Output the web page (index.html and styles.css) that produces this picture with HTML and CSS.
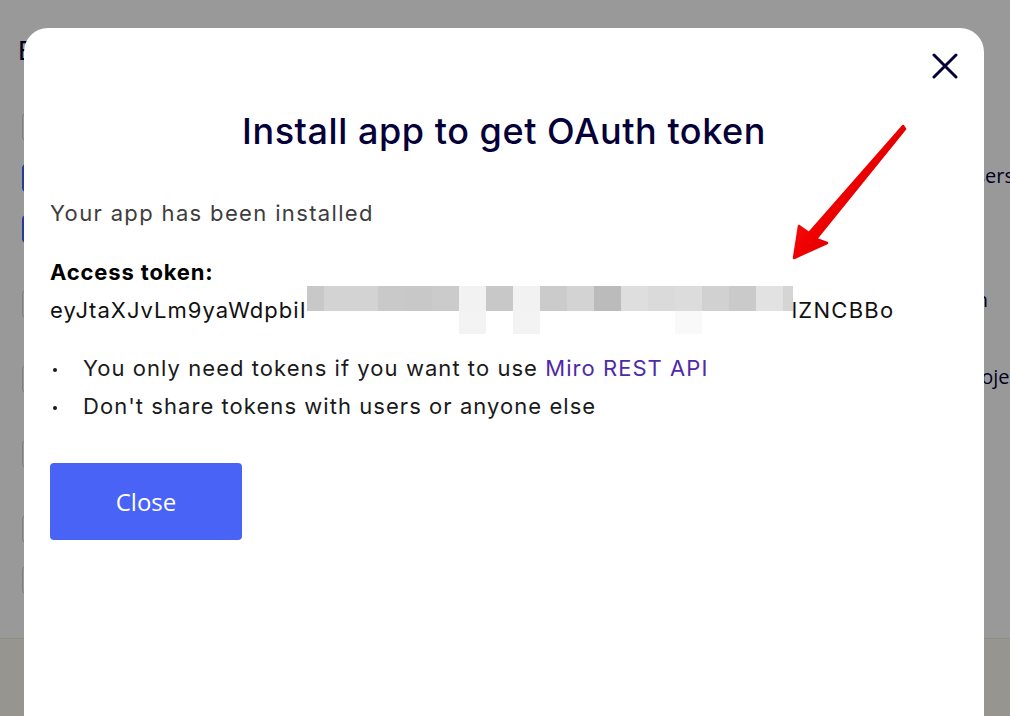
FILE: index.html
```html
<!DOCTYPE html>
<html lang="en">
<head>
<meta charset="utf-8">
<title>Install app to get OAuth token</title>
<link rel="stylesheet" href="styles.css">
</head>
<body>
<div class="page">
  <div class="page-main">
    <div class="left-col">
      <div class="page-heading">Edit app</div>
      <div class="field"></div>
      <div class="field blue gap-s"></div>
      <div class="field blue gap-s"></div>
      <div class="field gap-l"></div>
      <div class="field gap-l"></div>
      <div class="field gap-l"></div>
      <div class="field gap-l"></div>
      <div class="field gap-s"></div>
    </div>
    <div class="right-col">
      <div class="rtext r1">Users</div>
      <div class="rtext r2">Admin</div>
      <div class="rtext r3">Projects</div>
    </div>
  </div>
  <div class="page-footer"></div>
</div>

<div class="overlay"></div>

<div class="modal">
  <button class="modal-x" aria-label="Close">
    <svg width="26" height="26" viewBox="0 0 26 26"><path d="M2 2 L24 24 M24 2 L2 24" stroke="#050038" stroke-width="3" stroke-linecap="round" fill="none"/></svg>
  </button>
  <h1 class="modal-title">Install app to get OAuth token</h1>
  <p class="installed">Your app has been installed</p>
  <div class="token-label">Access token:</div>
  <div class="token-line">
    <span class="token-text">eyJtaXJvLm9yaWdpbiI</span>
    <span class="mosaic">
      <i style="background:#c8c8c8"></i><i style="background:#d3d3d3"></i><i style="background:#d3d3d3"></i><i style="background:#c9c9c9"></i><i style="background:#c8c8c8"></i><i style="background:#cbcbcb"></i><i style="background:#f2f2f2"></i><i style="background:#c8c8c8"></i><i style="background:#f2f2f2"></i><i style="background:#cbcbcb"></i><i style="background:#d3d3d3"></i><i style="background:#bbbbbb"></i><i style="background:#dedede"></i><i style="background:#dadada"></i><i style="background:#dcdcdc"></i><i style="background:#d1d1d1"></i><i style="background:#cacaca"></i><i style="background:#e2e2e2"></i><i style="background:#d5d5d5"></i>
      <i></i><i></i><i></i><i></i><i></i><i></i><i style="background:#f3f3f3"></i><i></i><i style="background:#f3f3f3"></i><i></i><i></i><i></i><i></i><i></i><i style="background:#f9f9f9"></i><i></i><i></i><i></i><i></i>
    </span>
    <span class="token-text token-end">lZNCBBo</span>
  </div>
  <ul class="notes">
    <li>You only need tokens if you want to use <a href="#" class="link">Miro REST API</a></li>
    <li>Don't share tokens with users or anyone else</li>
  </ul>
  <button class="close-btn">Close</button>

  <svg class="arrow" width="150" height="160" viewBox="0 0 150 160">
    <defs>
      <linearGradient id="ag" x1="0" y1="0" x2="1" y2="0.8">
        <stop offset="0" stop-color="#ff3030"/>
        <stop offset="0.5" stop-color="#f00000"/>
        <stop offset="1" stop-color="#c40000"/>
      </linearGradient>
    </defs>
    <path d="M133 16 L135 19 L46 129 L57 133 L24 148 L29 116 L39 123 Z" fill="url(#ag)" stroke="url(#ag)" stroke-width="2.5" stroke-linejoin="round"/>
  </svg>
</div>
</body>
</html>
```

FILE: styles.css
```css
* { box-sizing: border-box; }
html, body { margin: 0; padding: 0; }
body {
  width: 1010px;
  height: 716px;
  overflow: hidden;
  background: #ffffff;
  font-family: Inter, "Noto Sans", "Liberation Sans", sans-serif;
  position: relative;
}

/* background page */
.page { display: flex; flex-direction: column; height: 716px; }
.page-main { height: 638px; display: flex; }
.left-col { width: 400px; padding: 36px 0 0 18px; display: flex; flex-direction: column; }
.page-heading { font-size: 26px; line-height: 30px; color: #050038; margin-bottom: 47px; }
.field {
  margin-left: 4px;
  width: 300px;
  height: 28px;
  border: 1px solid #d4d4dc;
  border-radius: 4px;
  background: #ffffff;
}
.field.blue { background: #4262ff; border-color: #4262ff; }
.gap-s { margin-top: 23px; }
.gap-l { margin-top: 47px; }
.right-col { margin-left: auto; width: 49px; padding-top: 161px; font-family: "Open Sans", sans-serif; }
.rtext { font-size: 20px; line-height: 30px; color: #050038; white-space: nowrap; }
.r2 { margin-top: 94px; width: 27px; display: flex; justify-content: flex-end; }
.r3 { margin-top: 47px; }
.page-footer { flex: 1; background: #fcf9ef; border-top: 1px solid #f1ecd4; }

.overlay { position: absolute; inset: 0; background: rgba(0, 0, 0, 0.4); }

/* modal */
.modal {
  position: absolute;
  left: 24px;
  top: 28px;
  width: 960px;
  height: 720px;
  background: #ffffff;
  border-radius: 24px 24px 0 0;
  padding: 81px 26px 0 26px;
  display: flex;
  flex-direction: column;
  align-items: flex-start;
}
.modal-x {
  position: absolute;
  top: 25px;
  right: 26px;
  width: 26px;
  height: 26px;
  padding: 0;
  border: 0;
  background: none;
  display: flex;
}
.modal-title {
  align-self: stretch;
  margin: 0;
  text-align: center;
  font-size: 36px;
  line-height: 44px;
  font-weight: 500;
  letter-spacing: 0.55px;
  color: #050038;
}
.installed {
  margin: 44px 0 0 0;
  font-size: 22px;
  line-height: 32px;
  letter-spacing: 1.35px;
  color: #3d3d3d;
}
.token-label {
  margin-top: 24px;
  font-size: 22px;
  line-height: 38px;
  font-weight: 700;
  letter-spacing: 0.85px;
  color: #000000;
}
.token-line { display: flex; align-items: flex-start; height: 38px; }
.token-text { font-size: 22px; line-height: 38px; letter-spacing: 1.05px; color: #111111; white-space: nowrap; }
.mosaic {
  display: grid;
  grid-template-columns: 17px repeat(17, 27px) 10px;
  grid-template-rows: 25px 23px;
  margin: -5px 0 -5px 0;
  position: relative;
  z-index: 1;
}
.mosaic i { display: block; }
.token-end { margin-left: -1px; letter-spacing: 1.3px; }

.notes { margin: 20px 0 0 0; padding: 0; list-style: none; }
.notes li {
  position: relative;
  padding-left: 33px;
  font-size: 22px;
  line-height: 38px;
  letter-spacing: 1.05px;
  color: #1a1a1a;
}
.notes li::before {
  content: "";
  position: absolute;
  left: 3px;
  top: 19px;
  width: 4px;
  height: 4px;
  border-radius: 50%;
  background: #1a1a1a;
}
.link { color: #4f2aa6; text-decoration: none; }

.close-btn {
  margin-top: 38px;
  width: 192px;
  height: 77px;
  border: 0;
  border-radius: 4px;
  background: #4a63f7;
  color: #ffffff;
  font-family: "Open Sans", sans-serif;
  font-size: 24px;
}

.arrow { position: absolute; left: 746px; top: 82px; }
```
